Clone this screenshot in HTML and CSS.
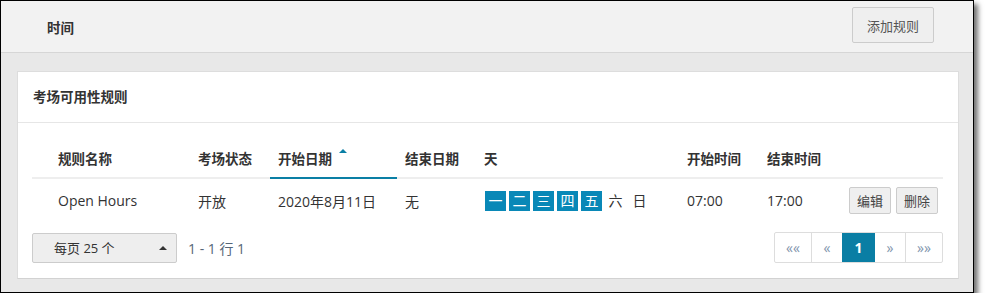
FILE: index.html
```
<!DOCTYPE html>
<html lang="zh-CN">
<head>
    <meta charset="UTF-8">
    <title>时间</title>
    <link rel="stylesheet" href="styles.css">
</head>
<body>
    <div class="frame">
        <!-- 顶部标题栏 -->
        <div class="topbar">
            <span class="topbar-title">时间</span>
            <button class="btn btn-add">添加规则</button>
        </div>

        <div class="content">
            <div class="card">
                <div class="card-header">考场可用性规则</div>
                <div class="card-body">
                    <table class="rules">
                        <colgroup>
                            <col style="width:18px">
                            <col style="width:140px">
                            <col style="width:80px">
                            <col style="width:127px">
                            <col style="width:79px">
                            <col style="width:203px">
                            <col style="width:80px">
                            <col style="width:82px">
                            <col style="width:102px">
                        </colgroup>
                        <thead>
                            <tr>
                                <th></th>
                                <th>规则名称</th>
                                <th>考场状态</th>
                                <th class="sorted">开始日期<span class="sort-up"></span></th>
                                <th>结束日期</th>
                                <th>天</th>
                                <th>开始时间</th>
                                <th>结束时间</th>
                                <th></th>
                            </tr>
                        </thead>
                        <tbody>
                            <tr>
                                <td></td>
                                <td>Open Hours</td>
                                <td>开放</td>
                                <td>2020年8月11日</td>
                                <td>无</td>
                                <td>
                                    <span class="day on">一</span><span class="day on">二</span><span class="day on">三</span><span class="day on">四</span><span class="day on">五</span><span class="day">六</span><span class="day">日</span>
                                </td>
                                <td>07:00</td>
                                <td>17:00</td>
                                <td class="actions">
                                    <button class="btn btn-sm">编辑</button><button class="btn btn-sm">删除</button>
                                </td>
                            </tr>
                        </tbody>
                    </table>

                    <div class="table-footer">
                        <div class="page-size">
                            <span>每页 25 个</span>
                            <span class="caret"></span>
                        </div>
                        <span class="row-count">1 - 1 行 1</span>
                        <div class="pager">
                            <span class="pg pg-first">&laquo;&laquo;</span>
                            <span class="pg pg-prev">&laquo;</span>
                            <span class="pg active">1</span>
                            <span class="pg pg-next">&raquo;</span>
                            <span class="pg pg-last">&raquo;&raquo;</span>
                        </div>
                    </div>
                </div>
            </div>
        </div>
    </div>
</body>
</html>
```

FILE: styles.css
```
html, body {
    margin: 0;
    padding: 0;
    background: #ffffff;
}

body {
    font-family: "Open Sans", "Noto Sans CJK SC", sans-serif;
    font-size: 14px;
    color: #333333;
}

/* 外框 */
.frame {
    width: 972px;
    height: 291px;
    border: 1px solid #000000;
    background: #e8e8e8;
    box-shadow: 4px 4px 5px rgba(0, 0, 0, 0.55);
    display: flex;
    flex-direction: column;
}

.topbar {
    height: 51px;
    flex: none;
    background: #f2f2f2;
    border-bottom: 1px solid #d6d6d6;
    display: flex;
    align-items: center;
    justify-content: space-between;
    padding: 0 39px 0 46px;
}

.topbar-title {
    font-weight: bold;
    color: #333333;
    font-size: 13.5px;
}

.btn {
    font-family: "Open Sans", "Noto Sans CJK SC", sans-serif;
    font-size: 13px;
    color: #444444;
    background: #efefef;
    border: 1px solid #cccccc;
    border-radius: 2px;
    padding: 0;
    cursor: pointer;
}

.btn-add {
    width: 82px;
    height: 36px;
    margin-top: -3px;
    color: #555555;
}

.content {
    flex: 1;
    padding: 18px 14px 13px 16px;
}

.card {
    background: #ffffff;
    border: 1px solid #dddddd;
    border-bottom-color: #d2d2d2;
}

.card-header {
    height: 50px;
    line-height: 50px;
    padding-left: 15px;
    font-weight: bold;
    font-size: 13.5px;
    border-bottom: 1px solid #e6e6e6;
}

.card-body {
    padding: 15px 15px 15px 14px;
}

/* 表格 */
.rules {
    width: 911px;
    table-layout: fixed;
    border-collapse: collapse;
}

.rules th,
.rules td {
    text-align: left;
    padding: 0 8px;
    white-space: nowrap;
}

.rules th {
    height: 39px;
    font-weight: bold;
    font-size: 13.5px;
    border-bottom: 2px solid #eeeeee;
    vertical-align: middle;
    position: relative;
}

.rules th.sorted {
    border-bottom-color: #0a7fa5;
}

.sort-up {
    position: absolute;
    left: 69px;
    top: 11px;
    width: 0;
    height: 0;
    border-left: 4px solid transparent;
    border-right: 4px solid transparent;
    border-bottom: 4px solid #0a7fa5;
}

.rules td {
    height: 43px;
    vertical-align: middle;
}

.day {
    display: inline-block;
    width: 21px;
    height: 20px;
    line-height: 20px;
    text-align: center;
    margin-right: 3px;
    vertical-align: middle;
    color: #333333;
}

.day:first-child {
    margin-left: 1px;
}

.day.on {
    background: #0988b7;
    color: #ffffff;
}

.actions .btn-sm {
    width: 42px;
    height: 27px;
    margin-right: 5px;
}

/* 底部：每页数量 + 分页 */
.table-footer {
    display: flex;
    align-items: center;
    margin-top: 10px;
}

.page-size {
    box-sizing: border-box;
    width: 145px;
    height: 30px;
    border: 1px solid #cccccc;
    border-radius: 2px;
    background: #eeeeee;
    display: flex;
    align-items: center;
    justify-content: space-between;
    padding: 0 9px 0 21px;
    font-size: 13px;
    color: #333333;
}

.caret {
    width: 0;
    height: 0;
    border-left: 4px solid transparent;
    border-right: 4px solid transparent;
    border-bottom: 4px solid #333333;
}

.row-count {
    margin-left: 11px;
    color: #556677;
}

.pager {
    margin-left: auto;
    display: flex;
    border: 1px solid #dddddd;
    border-radius: 2px;
    height: 29px;
}

.pg {
    display: flex;
    align-items: center;
    justify-content: center;
    color: #7f95ad;
    font-size: 14px;
    border-left: 1px solid #dddddd;
}

.pg:first-child {
    border-left: none;
}

.pg-first { width: 36px; }
.pg-prev { width: 30px; }
.pg-next { width: 30px; border-left: none; }
.pg-last { width: 36px; }

.pg.active {
    width: 33px;
    background: #0a7ea4;
    color: #ffffff;
    font-weight: bold;
    border-left: none;
}
```
